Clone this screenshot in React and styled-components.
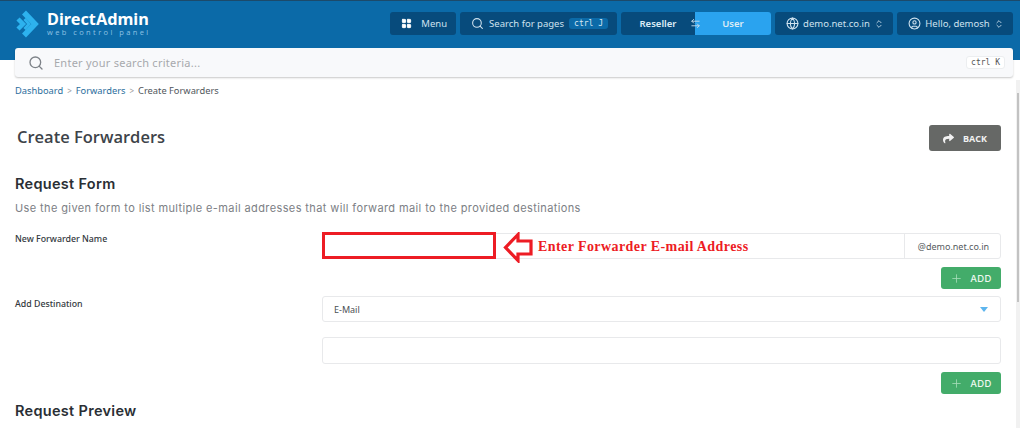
import React from 'react'
import styled, { createGlobalStyle } from 'styled-components'
import { ArrowLeftRight, ChevronsUpDown, CircleUser, Globe, LayoutGrid, Plus, Search } from 'lucide-react'
import { FaShare } from 'react-icons/fa'

const Global = createGlobalStyle`
  html, body { margin: 0; padding: 0; background: #fff; overflow: hidden; }
  body { font-family: "Open Sans", "Liberation Sans", sans-serif; }
`

const Logo = () => (
  <svg width="26" height="30" viewBox="0 0 26 30" fill="none" stroke="#2db2ee">
    <path d="M9 3.5 L20 15 L9 26.5" strokeWidth="5.5" />
    <path d="M3 10 L8 15 L3 20" strokeWidth="4.5" />
    <path d="M9.5 10 L14 15 L9.5 20" strokeWidth="3" />
  </svg>
)

export default function App() {
  return (
    <Page>
      <Global />
      <Header>
        <Brand>
          <Logo />
          <BrandText>
            <BrandName>DirectAdmin</BrandName>
            <BrandSub>web control panel</BrandSub>
          </BrandText>
        </Brand>
        <NavBar>
          <NavItem $width={66}>
            <LayoutGrid size={11} fill="#fff" color="#fff" />
            <span>Menu</span>
          </NavItem>
          <NavItem $width={157}>
            <Search size={13} />
            <span>Search for pages</span>
            <NavKey>ctrl J</NavKey>
          </NavItem>
          <Switcher>
            <SwitchSide $width={74}>Reseller</SwitchSide>
            <SwitchSide $width={76} $active>User</SwitchSide>
            <SwitchIcon><ArrowLeftRight size={11} /></SwitchIcon>
          </Switcher>
          <NavItem $width={118}>
            <Globe size={13} />
            <span>demo.net.co.in</span>
            <ChevronsUpDown size={10} />
          </NavItem>
          <NavItem $width={116}>
            <CircleUser size={13} />
            <span>Hello, demosh</span>
            <ChevronsUpDown size={10} />
          </NavItem>
        </NavBar>
      </Header>

      <Body>
        <Content>
          <SearchBar>
            <Search size={16} color="#7d8288" />
            <SearchText>Enter your search criteria...</SearchText>
            <SearchKey>ctrl K</SearchKey>
          </SearchBar>

          <Crumbs>
            <CrumbLink>Dashboard</CrumbLink>
            <CrumbSep>&gt;</CrumbSep>
            <CrumbLink>Forwarders</CrumbLink>
            <CrumbSep>&gt;</CrumbSep>
            <span>Create Forwarders</span>
          </Crumbs>

          <TitleRow>
            <Title>Create Forwarders</Title>
            <BackButton>
              <FaShare size={11} />
              BACK
            </BackButton>
          </TitleRow>

          <SectionTitle>Request Form</SectionTitle>
          <Description>Use the given form to list multiple e-mail addresses that will forward mail to the provided destinations</Description>

          <FormRow>
            <FieldLabel>New Forwarder Name</FieldLabel>
            <FieldColumn>
              <NameField>
                <NameInput />
                <Domain>@demo.net.co.in</Domain>
                <Highlight />
                <ArrowMark>
                  <svg width="30" height="31" viewBox="0 0 30 31">
                    <path d="M15 2.5 L2.5 15.5 L15 28.5 L15 22 L28 22 L28 9 L15 9 Z" fill="#fff" stroke="#ed1c24" strokeWidth="3.2" />
                  </svg>
                </ArrowMark>
                <Note>Enter Forwarder E-mail Address</Note>
              </NameField>
              <AddButton>
                <Plus size={13} strokeWidth={1.5} color="#a5dcb8" />
                ADD
              </AddButton>
            </FieldColumn>
          </FormRow>

          <FormRow $gap={7}>
            <FieldLabel $top={2}>Add Destination</FieldLabel>
            <FieldColumn>
              <SelectBox>
                E-Mail
                <Caret />
              </SelectBox>
              <TextBox />
              <AddButton>
                <Plus size={13} strokeWidth={1.5} color="#a5dcb8" />
                ADD
              </AddButton>
            </FieldColumn>
          </FormRow>

          <SectionTitle $top={8}>Request Preview</SectionTitle>
        </Content>
        <Scrollbar>
          <ScrollThumb />
        </Scrollbar>
      </Body>
    </Page>
  )
}

const Page = styled.div`
  width: 1024px;
  height: 433px;
  overflow: hidden;
`

const Body = styled.div`
  display: flex;
  height: 368px;
`

const Content = styled.div`
  width: 1016px;
  flex-shrink: 0;
  overflow: hidden;
  margin-top: -12px;
  padding-bottom: 12px;
  height: 368px;
  box-sizing: content-box;
`

const Scrollbar = styled.div`
  width: 4px;
  height: 348px;
  margin-top: 20px;
  padding: 13px 1px 0;
  box-sizing: border-box;
  background: #f1f1f1;
`

const ScrollThumb = styled.div`
  height: 209px;
  background: #c2c2c2;
`

const Header = styled.div`
  display: flex;
  justify-content: space-between;
  width: 1020px;
  height: 60px;
  padding: 11px 7px 0 15px;
  box-sizing: border-box;
  background: #0b6aa8;
  border-top: 1px solid #1c4a6b;
`

const Brand = styled.div`
  display: flex;
  gap: 6px;
  margin-top: -3px;
  height: 30px;
  align-items: center;
`

const BrandText = styled.div`
  display: flex;
  flex-direction: column;
  color: #fff;
`

const BrandName = styled.div`
  font-family: "Noto Sans", sans-serif;
  font-size: 16.3px;
  line-height: 17px;
  font-weight: 700;
`

const BrandSub = styled.div`
  font-size: 7.5px;
  line-height: 9px;
  letter-spacing: 2.4px;
  color: #8ec2e4;
`

const NavBar = styled.div`
  display: flex;
  gap: 4px;
  height: 23px;
`

const NavItem = styled.div`
  display: flex;
  align-items: center;
  justify-content: space-between;
  box-sizing: border-box;
  width: ${props => props.$width}px;
  padding: 0 9px 0 11px;
  background: #074b7c;
  border-radius: 3px;
  color: #cfe2ef;
  font-family: "Noto Sans", sans-serif;
  font-size: 9.5px;
  white-space: nowrap;
`

const NavKey = styled.span`
  padding: 1px 5px;
  background: #0b6aa8;
  border-radius: 3px;
  color: #d5e7f3;
  font-family: "DejaVu Sans Mono", monospace;
  font-size: 8px;
`

const Switcher = styled.div`
  position: relative;
  display: flex;
  width: 150px;
  border-radius: 3px;
  overflow: hidden;
`

const SwitchSide = styled.div`
  width: ${props => props.$width}px;
  display: flex;
  align-items: center;
  justify-content: center;
  background: ${props => (props.$active ? '#2aa3ef' : '#074b7c')};
  color: #dcecf6;
  font-family: "Noto Sans", sans-serif;
  font-size: 9.5px;
  font-weight: 600;
`

const SwitchIcon = styled.span`
  position: absolute;
  left: 69px;
  top: 6px;
  display: flex;
  color: #c5dcec;
`

const SearchBar = styled.div`
  display: flex;
  align-items: center;
  height: 29px;
  margin: 0 3px 0 15px;
  padding: 0 8px 0 13px;
  background: #f8f9fb;
  border-radius: 3px;
  box-shadow: 0 1px 2px rgba(0, 0, 0, 0.22);
`

const SearchText = styled.div`
  flex: 1;
  margin-left: 10px;
  color: #a7a9ad;
  font-family: "Noto Sans", sans-serif;
  font-size: 11px;
  letter-spacing: 0.25px;
`

const SearchKey = styled.div`
  padding: 1px 4px;
  background: #fff;
  border: 1px solid #eceef0;
  border-radius: 3px;
  color: #555;
  font-family: "DejaVu Sans Mono", monospace;
  font-size: 8px;
`

const Crumbs = styled.div`
  display: flex;
  align-items: center;
  gap: 4px;
  margin: 7px 0 0 15px;
  color: #50565c;
  font-family: "Noto Sans", sans-serif;
  font-size: 9.3px;
  line-height: 14px;
`

const CrumbLink = styled.span`
  color: #2b6d9c;
`

const CrumbSep = styled.span`
  color: #999;
  font-size: 8px;
`

const TitleRow = styled.div`
  display: flex;
  justify-content: space-between;
  align-items: center;
  height: 26px;
  margin: 27px 15px 0 17px;
`

const Title = styled.h1`
  margin: 0 0 4px;
  color: #3d4349;
  font-size: 16.5px;
  font-weight: 600;
`

const BackButton = styled.div`
  display: flex;
  align-items: center;
  justify-content: center;
  gap: 9px;
  width: 72px;
  height: 26px;
  background: #666866;
  border-radius: 3px;
  color: #f2f2f2;
  font-size: 9px;
  font-weight: 700;
`

const SectionTitle = styled.h2`
  margin: ${props => props.$top || 24}px 0 0 15px;
  color: #2a2f35;
  font-family: "Inter", sans-serif;
  font-size: 14.5px;
  line-height: 18px;
  font-weight: 600;
  letter-spacing: 0.3px;
`

const Description = styled.p`
  margin: 8px 0 0 15px;
  color: #7c8085;
  font-family: "Inter", sans-serif;
  font-size: 11px;
  line-height: 14px;
  letter-spacing: 0.39px;
  white-space: nowrap;
`

const FormRow = styled.div`
  display: flex;
  margin: ${props => props.$gap || 18}px 15px 0;
`

const FieldLabel = styled.div`
  width: 307px;
  flex-shrink: 0;
  padding-top: ${props => props.$top || 0}px;
  color: #33383d;
  font-family: "Noto Sans", sans-serif;
  font-size: 8.8px;
  font-weight: 500;
  line-height: 12px;
`

const FieldColumn = styled.div`
  display: flex;
  flex: 1;
  flex-direction: column;
  align-items: flex-end;
`

const NameField = styled.div`
  position: relative;
  display: flex;
  width: 100%;
  height: 26px;
  box-sizing: border-box;
  border: 1px solid #e8e9eb;
  border-radius: 3px;
`

const NameInput = styled.div`
  flex: 1;
  border-right: 1px solid #e8e9eb;
`

const Domain = styled.div`
  display: flex;
  align-items: center;
  justify-content: center;
  width: 95px;
  padding-left: 2px;
  box-sizing: border-box;
  color: #555a5e;
  font-family: "Noto Sans", sans-serif;
  font-size: 9px;
`

const Highlight = styled.div`
  position: absolute;
  left: -1px;
  top: -2px;
  width: 174px;
  height: 27px;
  box-sizing: border-box;
  border: 3px solid #ed1c24;
`

const ArrowMark = styled.div`
  position: absolute;
  left: 180px;
  top: -2px;
`

const Note = styled.div`
  position: absolute;
  left: 215px;
  top: 5px;
  color: #ed1c24;
  font-family: "Liberation Serif", serif;
  font-size: 14px;
  font-weight: 700;
  letter-spacing: 0.42px;
  white-space: nowrap;
  background: #fff;
`

const AddButton = styled.div`
  display: flex;
  align-items: center;
  justify-content: center;
  gap: 7px;
  width: 60px;
  height: 22px;
  margin-top: 8px;
  background: #43ac6a;
  border-radius: 3px;
  color: #eef8f1;
  font-family: "Inter", sans-serif;
  font-size: 9.5px;
  font-weight: 500;
  letter-spacing: 0.3px;
`

const SelectBox = styled.div`
  display: flex;
  align-items: center;
  justify-content: space-between;
  width: 100%;
  height: 26px;
  box-sizing: border-box;
  padding: 0 12px 0 11px;
  border: 1px solid #e8e9eb;
  border-radius: 3px;
  color: #4a4f54;
  font-family: "Noto Sans", sans-serif;
  font-size: 9px;
`

const Caret = styled.span`
  width: 0;
  height: 0;
  border-left: 4px solid transparent;
  border-right: 4px solid transparent;
  border-top: 5px solid #5db5ee;
`

const TextBox = styled.div`
  width: 100%;
  height: 27px;
  box-sizing: border-box;
  margin-top: 15px;
  border: 1px solid #e8e9eb;
  border-radius: 3px;
`
